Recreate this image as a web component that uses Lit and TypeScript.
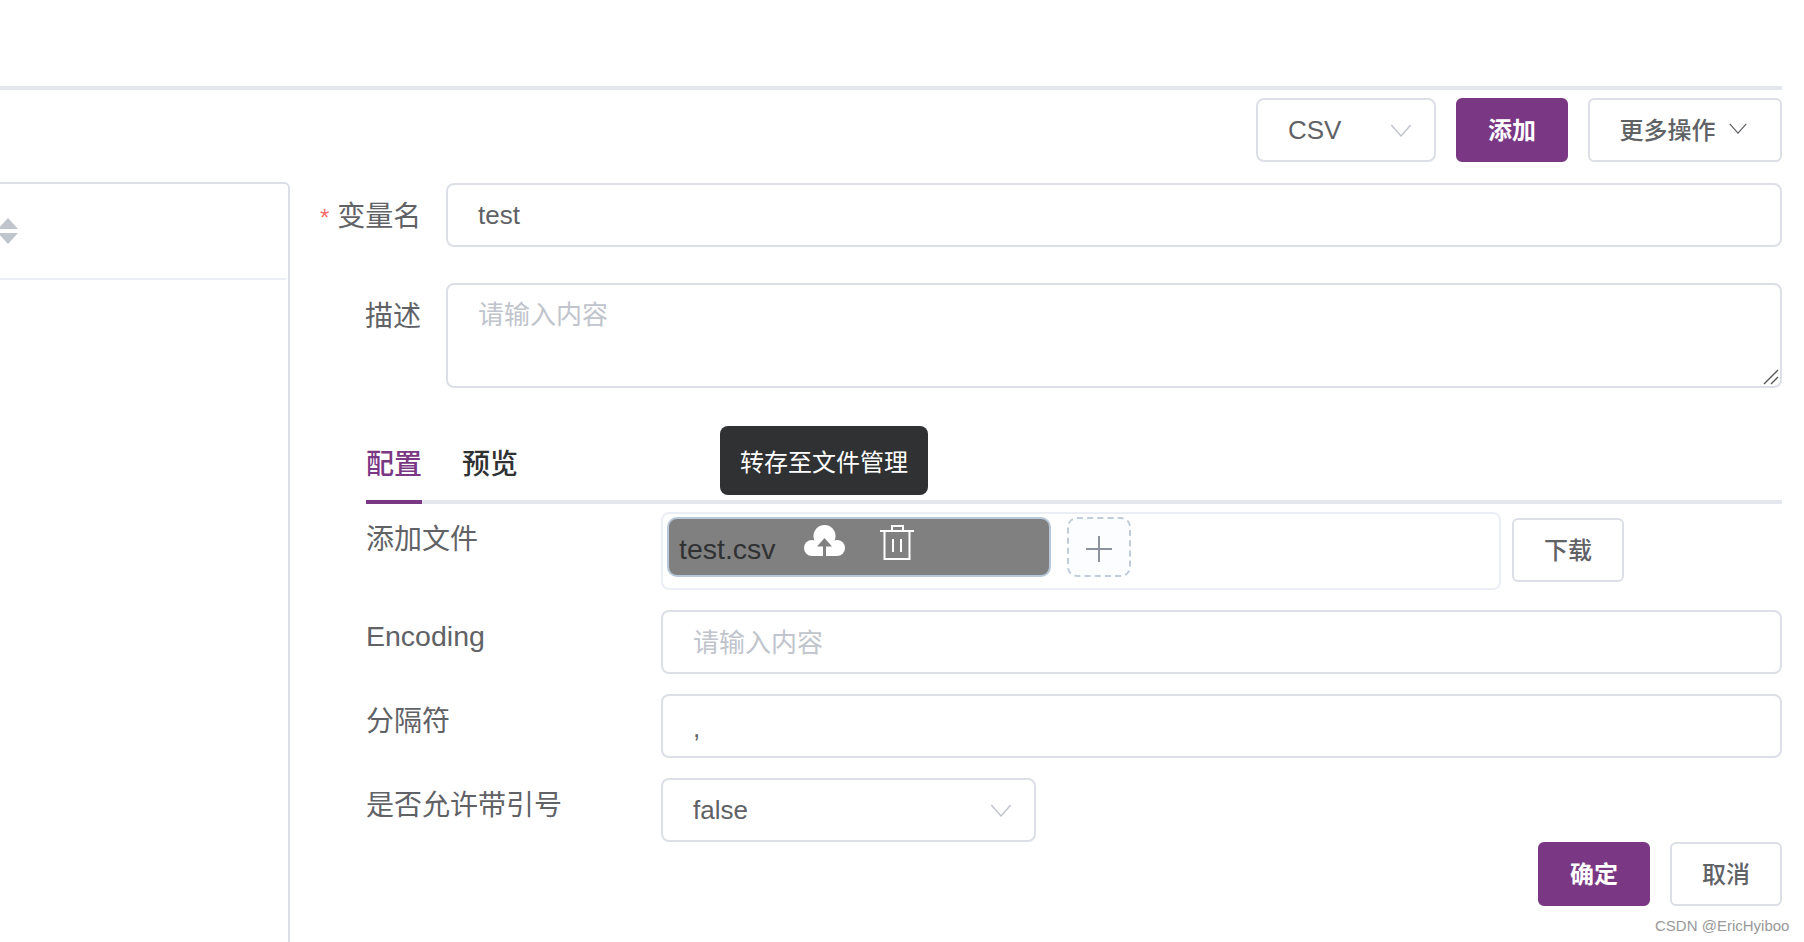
import { LitElement, html, css } from "lit";
import { customElement } from "lit/decorators.js";

const chevron = (w: number, h: number, color: string) => html`<svg width=${w} height=${h} viewBox="0 0 20 12" fill="none" stroke=${color} stroke-width="1.4"><path d="M1 1l9 10 9-10"/></svg>`;

@customElement("app-root")
export class AppRoot extends LitElement {
  static styles = css`
    :host { display: block; position: relative; width: 1804px; height: 942px; overflow: hidden; background: #fff; color: #606266;
      font-family: "Liberation Sans", "Noto Sans CJK SC", sans-serif; font-size: 28px; box-sizing: border-box; padding: 86px 22px 0 0; }
    * { box-sizing: border-box; }
    .rule { height: 4px; background: #e4e7ed; }
    .toolbar { display: flex; justify-content: flex-end; margin-top: 8px; height: 64px; }
    .control { border: 2px solid #dcdfe6; border-radius: 8px; background: #fff; display: flex; align-items: center; justify-content: space-between; font-size: 26px; color: #606266; padding: 0 30px; }
    .btn { display: flex; align-items: center; justify-content: center; border: 2px solid #dcdfe6; border-radius: 6px; background: #fff; color: #606266; font-size: 24px; font-weight: 500; padding-bottom: 3px; }
    .primary { background: #7a3884; border-color: #7a3884; color: #fff; font-weight: 700; }
    .csv { width: 180px; padding-right: 22px; }
    .add { width: 112px; margin-left: 20px; }
    .more { width: 194px; margin-left: 20px; gap: 12px; padding-right: 3px; }
    .main { display: flex; margin-top: 20px; height: 760px; }
    .left { width: 290px; border-top: 2px solid #dcdfe6; border-right: 2px solid #dcdfe6; border-top-right-radius: 6px; flex: none; }
    .left-head { height: 96px; border-bottom: 2px solid #ebeef5; margin-right: 2px; padding-top: 34px; }
    .left-head svg { display: block; }
    .form { flex: 1; padding-left: 30px; padding-top: 1px; position: relative; }
    .row { display: flex; }
    .top-label { width: 126px; height: 64px; flex: none; text-align: right; padding: 2px 25px 0 0; line-height: 64px; white-space: nowrap; }
    .req { color: #f56c6c; font-size: 24px; margin-right: 8px; }
    .input { flex: 1; height: 64px; justify-content: flex-start; padding: 0 30px; }
    .ph { color: #c0c4cc; position: relative; top: -2px; }
    .textarea { flex: 1; height: 105px; align-items: flex-start; padding: 11px 30px; position: relative; justify-content: flex-start; }
    .grip { position: absolute; right: 1px; bottom: 1px; }
    .r2 { margin-top: 36px; }
    .tabs { margin: 39px 0 0 46px; height: 77px; border-bottom: 4px solid #e4e7ed; display: flex; gap: 40px; }
    .tab { height: 77px; padding-top: 18px; line-height: 40px; color: #303133; font-weight: 500; position: relative; border-bottom: 4px solid transparent; }
    .tab.on { color: #7a3884; border-bottom-color: #7a3884; }
    .cfg { margin: 0 0 0 46px; }
    .cfg-row { display: flex; }
    .cfg-label { width: 295px; flex: none; line-height: 40px; white-space: nowrap; margin-top: 8px; }
    .latin-label { margin-top: 6px; font-size: 28.500px; }
    .file-row { margin-top: 8px; align-items: flex-start; }
    .files { width: 840px; height: 78px; border: 2px solid #ebeef5; border-radius: 8px; padding: 3px 4px; display: flex; gap: 16px; flex: none; }
    .file { width: 384px; height: 60px; background: #808080; border: 2px solid #b9c8d9; border-radius: 10px; display: flex; color: #303133; font-size: 28.500px; padding-left: 10px; }
    .fname { margin-top: 12px; line-height: 36px; width: 125px; }
    .file-icons { display: flex; gap: 35px; margin-top: 6px; height: 40px; align-items: flex-start; }
    .plus { width: 64px; height: 60px; border: 2px dashed #c0ccda; border-radius: 10px; background: #fbfdff; display: flex; align-items: center; justify-content: center; padding-top: 3px; }
    .dl { width: 112px; height: 64px; margin: 6px 0 0 11px; }
    .cfg-input { flex: 1; height: 64px; padding: 0 30px; justify-content: flex-start; }
    .r-enc { margin-top: 20px; }
    .r-sep { margin-top: 20px; }
    .r-quote { margin-top: 20px; }
    .quote { flex: none; width: 375px; height: 64px; padding-right: 22px; }
    .comma { position: relative; top: 2px; }
    .actions { display: flex; justify-content: flex-end; height: 64px; }
    .actions .btn { width: 112px; height: 64px; }
    .actions .btn + .btn { margin-left: 20px; }
    .tip { position: absolute; left: 720px; top: 426px; width: 208px; height: 69px; background: #303133; color: #fff; border-radius: 8px; font-size: 24px; display: flex; align-items: center; justify-content: center; }
    .mark { position: absolute; left: 1655px; top: 917px; font-size: 15px; color: #999; white-space: nowrap; line-height: 18px; }
  `;

  render() {
    return html`
      <div class="rule"></div>
      <div class="toolbar">
        <div class="control csv"><span>CSV</span>${chevron(22, 13, "#c0c4cc")}</div>
        <div class="btn primary add">添加</div>
        <div class="btn more"><span>更多操作</span>${chevron(20, 11, "#606266")}</div>
      </div>
      <div class="main">
        <div class="left">
          <div class="left-head">
            <svg width="18" height="26" viewBox="0 0 18 26" fill="#c0c4cc"><path d="M8 0l10 11H-2zM8 26L-2 15h20z"/></svg>
          </div>
        </div>
        <div class="form">
          <div class="row">
            <div class="top-label"><span class="req">*</span>变量名</div>
            <div class="control input">test</div>
          </div>
          <div class="row r2">
            <div class="top-label">描述</div>
            <div class="control textarea"><span class="ph">请输入内容</span>
              <svg class="grip" width="16" height="16" viewBox="0 0 16 16" stroke="#555" stroke-width="1.4" fill="none"><path d="M1 15L15 1M8 15l7-7"/></svg>
            </div>
          </div>
          <div class="tabs">
            <div class="tab on">配置</div>
            <div class="tab">预览</div>
          </div>
          <div class="cfg">
            <div class="cfg-row file-row">
              <div class="cfg-label">添加文件</div>
              <div class="files">
                <div class="file">
                  <span class="fname">test.csv</span>
                  <div class="file-icons">
                    <svg width="41" height="31" viewBox="0 0 41 31">
                      <g fill="#fff"><circle cx="8" cy="23" r="8"/><circle cx="20.500" cy="11" r="11"/><circle cx="33" cy="23" r="8"/><rect x="8" y="18" width="25" height="13"/></g>
                      <path fill="#808080" d="M20.500 13l7.500 8.500h-6V31h-3v-9.500h-6z"/>
                    </svg>
                    <svg width="34" height="35" viewBox="0 0 34 35" fill="none" stroke="#fff" stroke-width="2"><path d="M0 6h34M4.500 6v28h25V6M12 6V1h11v5M13 14v13M21 14v13"/></svg>
                  </div>
                </div>
                <div class="plus">
                  <svg width="28" height="28" viewBox="0 0 28 28" stroke="#8c939d" stroke-width="2" fill="none"><path d="M14 1v26M1 14h26"/></svg>
                </div>
              </div>
              <div class="btn dl">下载</div>
            </div>
            <div class="cfg-row r-enc">
              <div class="cfg-label latin-label">Encoding</div>
              <div class="control cfg-input"><span class="ph">请输入内容</span></div>
            </div>
            <div class="cfg-row r-sep">
              <div class="cfg-label">分隔符</div>
              <div class="control cfg-input"><span class="comma">,</span></div>
            </div>
            <div class="cfg-row r-quote">
              <div class="cfg-label">是否允许带引号</div>
              <div class="control quote"><span>false</span>${chevron(22, 13, "#c0c4cc")}</div>
            </div>
            <div class="actions">
              <div class="btn primary">确定</div>
              <div class="btn">取消</div>
            </div>
          </div>
        </div>
      </div>
      <div class="tip">转存至文件管理</div>
      <div class="mark">CSDN @EricHyiboo</div>
    `;
  }
}
